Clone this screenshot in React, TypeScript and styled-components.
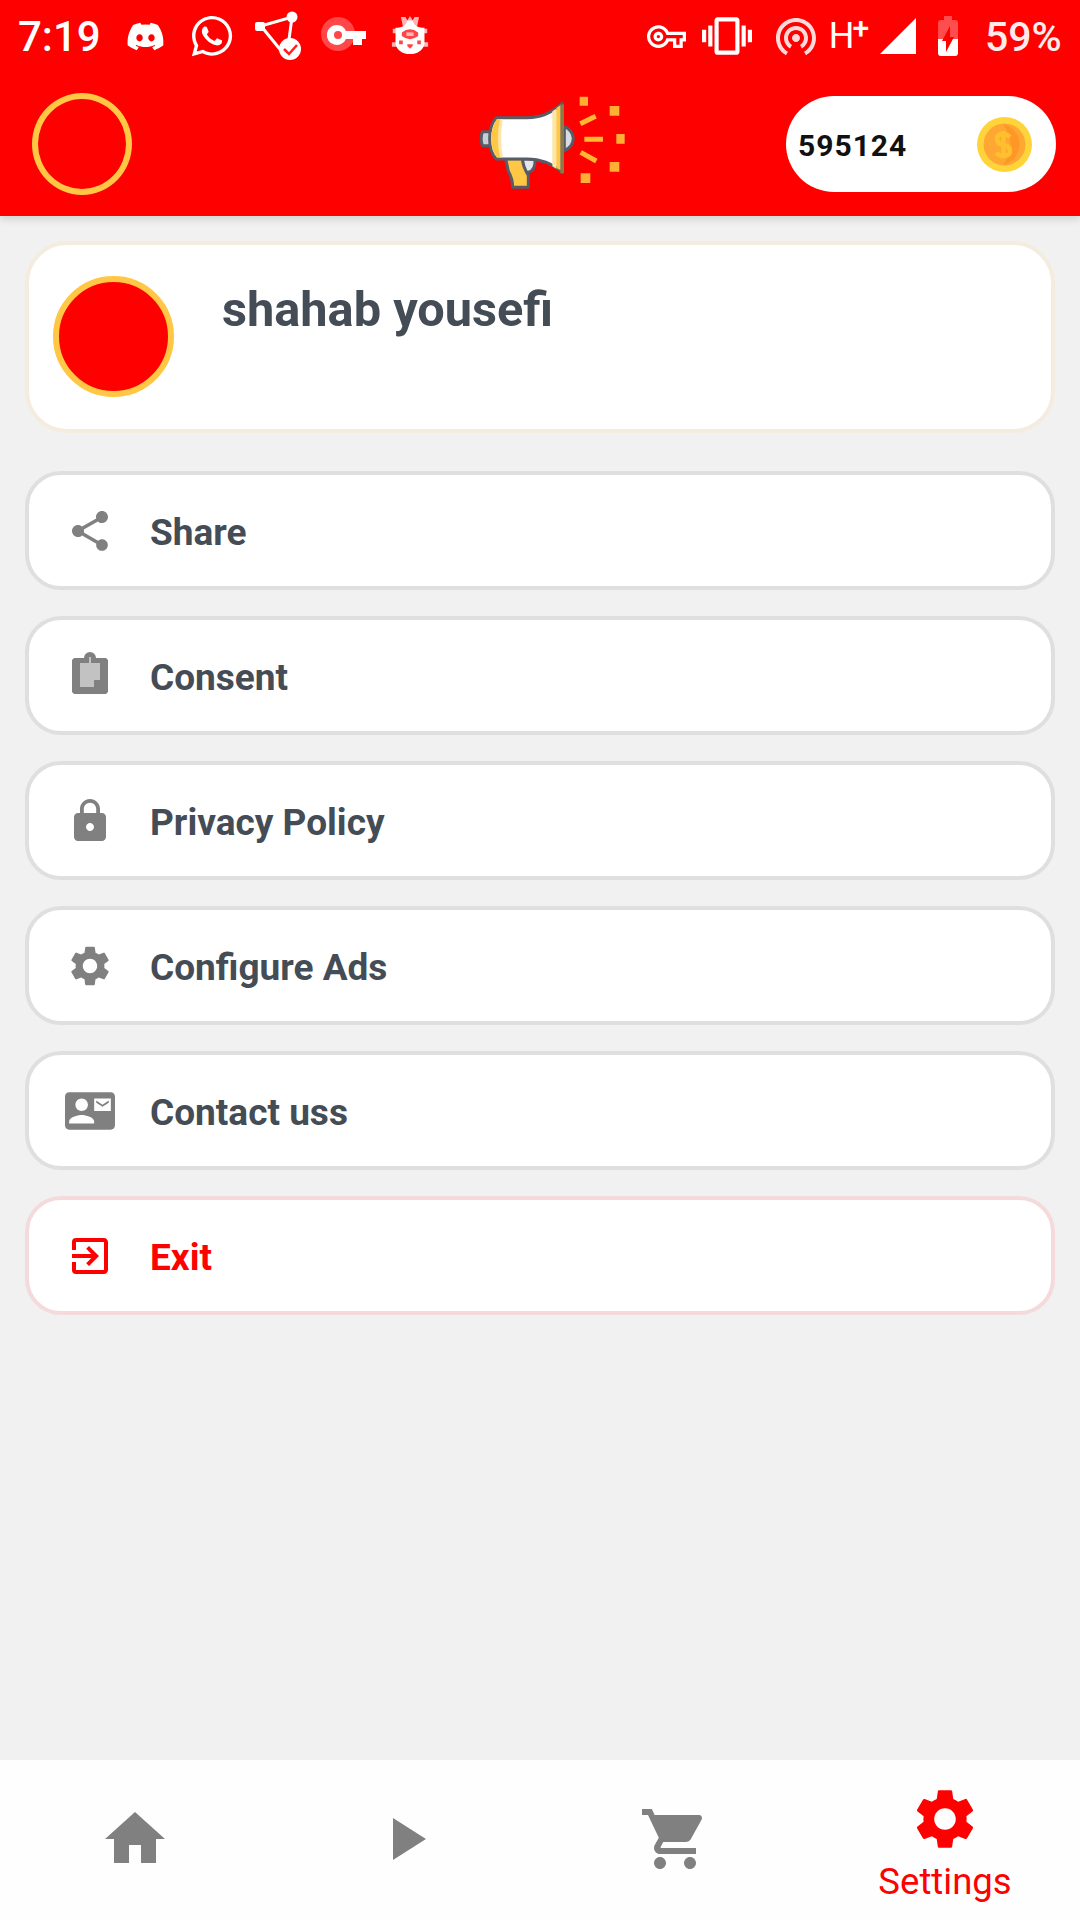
import React from 'react';
import styled, { createGlobalStyle } from 'styled-components';
import {
  MdShare, MdLock, MdSettings, MdContactMail, MdExitToApp, MdHome, MdPlayArrow,
  MdShoppingCart, MdVibration, MdWifiTethering, MdOutlineVpnKey, MdBatteryCharging50,
} from 'react-icons/md';
import { FaDiscord, FaWhatsapp } from 'react-icons/fa';

const GlobalStyle = createGlobalStyle`
  *, *::before, *::after { box-sizing: border-box; }
  body { margin: 0; background: #f1f1f1; }
  svg { display: block; flex: none; }
`;

const Screen = styled.div`
  width: 1080px;
  height: 1920px;
  display: flex;
  flex-direction: column;
  overflow: hidden;
  background: #f1f1f1;
  font-family: Roboto, "Liberation Sans", sans-serif;
`;

const Header = styled.header`
  flex: none;
  height: 216px;
  background: #ff0000;
  color: #fff;
  box-shadow: 0 3px 8px rgba(0, 0, 0, 0.14);
`;

const StatusBar = styled.div`
  height: 72px;
  display: flex;
  align-items: center;
  justify-content: space-between;
  padding: 0 17px 0 18px;
`;

const StatusGroup = styled.div`
  display: flex;
  align-items: center;
`;

const Clock = styled.span`
  width: 84px;
  padding-top: 2px;
  font-size: 42px;
  font-weight: 500;
  line-height: 72px;
  white-space: nowrap;
`;

const Battery = styled.span`
  width: 78px;
  padding-top: 2px;
  font-size: 41px;
  font-weight: 500;
  line-height: 72px;
  white-space: nowrap;
  opacity: 0.92;
`;

const Slot = styled.span<{ $w: number; $gap: number; $faint?: boolean }>`
  width: ${(p) => p.$w}px;
  margin-left: ${(p) => p.$gap}px;
  display: flex;
  justify-content: center;
  opacity: ${(p) => (p.$faint ? 0.85 : 1)};
`;

const Network = styled.span`
  display: flex;
  align-items: flex-start;
  font-size: 36px;
  line-height: 40px;
`;

const NetworkPlus = styled.span`
  font-size: 30px;
  font-weight: 500;
  line-height: 24px;
  margin-left: -2px;
`;

const AppBar = styled.div`
  height: 144px;
  padding: 0 24px 0 32px;
  display: grid;
  grid-template-columns: 270px 1fr 270px;
  align-items: center;
`;

const Avatar = styled.div<{ $w: number; $h: number }>`
  flex: none;
  width: ${(p) => p.$w}px;
  height: ${(p) => p.$h}px;
  border: 6px solid #ffc743;
  border-radius: 50%;
  background: #ff0000;
`;

const Logo = styled.div`
  display: flex;
  padding-left: 175px;
`;

const Coins = styled.div`
  height: 96px;
  border-radius: 48px;
  background: #fff;
  color: #111;
  display: flex;
  align-items: center;
  justify-content: space-between;
  padding: 2px 23px 2px 12px;
  font-size: 30px;
  font-weight: 700;
  letter-spacing: 1px;
`;

const CoinCount = styled.span`
  padding-top: 3px;
`;

const Content = styled.main`
  flex: 1;
  padding: 25px 25px 0;
`;

const Profile = styled.section`
  height: 192px;
  border: 4px solid #f4ecdf;
  border-radius: 42px;
  background: #fff;
  display: flex;
  align-items: flex-start;
  padding: 31px 24px;
`;

const Name = styled.h1`
  margin: 0 0 0 48px;
  padding-top: 4px;
  color: #444c55;
  font-size: 48.7px;
  font-weight: 700;
  line-height: 60px;
`;

const Menu = styled.nav`
  margin-top: 38px;
  display: flex;
  flex-direction: column;
  gap: 26px;
`;

const MenuItem = styled.a<{ $danger?: boolean }>`
  height: 119px;
  border: 4px solid ${(p) => (p.$danger ? '#f5dadb' : '#dedfe1')};
  border-radius: 36px;
  background: #fff;
  display: flex;
  align-items: center;
  gap: 36px;
  padding-left: 37px;
  color: ${(p) => (p.$danger ? '#ff0000' : '#444c55')};
  font-size: 37px;
  font-weight: 700;

  svg { color: ${(p) => (p.$danger ? '#ff0000' : '#808080')}; }
`;

const IconBox = styled.span`
  width: 48px;
  display: flex;
  justify-content: center;
`;

const MenuLabel = styled.span`
  padding-top: 4px;
`;

const TabBar = styled.footer`
  flex: none;
  height: 160px;
  background: #fefefe;
  display: grid;
  grid-template-columns: repeat(4, 1fr);
`;

const Tab = styled.a<{ $active?: boolean }>`
  display: flex;
  flex-direction: column;
  align-items: center;
  padding-top: ${(p) => (p.$active ? 23 : 43)}px;
  color: ${(p) => (p.$active ? '#ff0000' : '#808080')};
`;

const TabLabel = styled.span`
  font-size: 36.5px;
  line-height: 42px;
  margin-top: 6px;
`;

const RouteCheckIcon = () => (
  <svg width="48" height="50" viewBox="0 0 48 50" fill="none" stroke="#fff" strokeWidth="3">
    <path d="M7 15 38 6 34 36M7 15 29 42" />
    <rect x="1" y="11" width="10" height="9" rx="2" fill="#fff" stroke="none" />
    <circle cx="38" cy="6" r="5.5" fill="#fff" stroke="none" />
    <circle cx="36" cy="38" r="11" fill="#fff" stroke="none" />
    <path d="m30 38 5 5 8-9" stroke="#ff2020" strokeWidth="2.5" />
  </svg>
);

const KeyBadgeIcon = () => (
  <svg width="48" height="40" viewBox="0 0 48 40">
    <circle cx="18" cy="18" r="17" fill="#ff4747" />
    <path fill="#fff" fillRule="evenodd" d="M17 9a10 10 0 1 0 9 14h7v6h9v-6h4v-8H26a10 10 0 0 0-9-6Zm1 6a4 4 0 1 1 0 8 4 4 0 0 1 0-8Z" />
  </svg>
);

const MascotIcon = () => (
  <svg width="38" height="46" viewBox="0 0 42 48">
    <path fill="#ffb0b0" d="M11 3h5l2 4 3-5 3 5 2-4h5l-2 10H13Z" />
    <path fill="#ffb0b0" d="M2 16h5v5H2zM35 16h5v5h-5zM1 31h6v5H1zM35 31h6v5h-6z" />
    <path fill="#fff" d="M5 15c6 0 11-1 13-8h6c2 7 7 8 13 8v18c-2 7-8 11-16 11S7 40 5 33Z" />
    <path fill="#ff4545" d="M12 20q9-7 18 0v4q-9 7-18 0Z" />
    <path fill="#ffb5b5" d="M17 20h8v4h-8z" />
    <path fill="#ff4545" d="m18 35 3 3 3-3v-2h-6ZM9 29h4v4H9zM29 29h4v4h-4z" />
  </svg>
);

const SignalIcon = () => (
  <svg width="36" height="36" viewBox="0 0 36 36">
    <path fill="#fff" d="M36 0v36H0Z" />
  </svg>
);

const MegaphoneIcon = () => (
  <svg width="153" height="100" viewBox="80 70 459 300">
    <g stroke="#565d68" strokeWidth="9" strokeLinejoin="round">
      <path fill="#c9cdd4" d="M120 183H96q-7 20 0 42h24Z" />
      <path fill="#d8dce2" d="M342 168q25 10 27 36-2 26-27 36Z" />
      <path fill="#e4e6ea" d="M216 265h38q2 35-20 40h-14Z" />
      <path fill="#ffc743" d="M166 264h50q2 25 18 50v36h-47q0-26-13-48Z" />
      <path fill="#fff" d="M138 141h92q60 0 105-43v206q-45-39-105-39h-92q-20-20-20-61t20-63Z" />
    </g>
    <path fill="#ffc743" d="M139 146h12v114h-12q-16-22-16-56t16-58Z" />
    <path fill="#ffe5a6" d="M149 146h8q-9 58 0 114h-8q-13-56 0-114ZM306 122l12-8v180l-12-7Z" />
    <path fill="#ffc743" d="m318 112 13-9v196l-13-7Z" />
    <path fill="#8d794c" d="M330 101h11v207h-11Z" />
    <g stroke="#ffb82f" strokeWidth="15">
      <path d="m390 159 46-22M402 206h56M391 245l47 26" />
    </g>
    <path fill="#ffaf33" d="M388 78h25v27h-25zM478 106h29v29h-29zM498 190h25v29h-25zM478 274h29v29h-29zM391 308h29v29h-29z" />
  </svg>
);

const CoinIcon = () => (
  <svg width="57" height="57" viewBox="0 0 57 57">
    <circle cx="28.5" cy="28.5" r="27.5" fill="#ffd43b" />
    <circle cx="28.5" cy="28.5" r="21" fill="#ffa733" />
    <path fill="#ff9726" d="M27 8a21 21 0 0 1 0 41q15-20 0-41Z" />
    <path fill="none" stroke="#ffc02e" strokeWidth="4.500" d="M34 21q-3-3-7-3-6 0-6 5t7 6q6 1 6 6t-7 5q-4 0-7-3M27.500 15v27" />
  </svg>
);

const ClipboardIcon = () => (
  <svg width="48" height="48" viewBox="0 0 48 48">
    <path fill="currentColor" d="M8 6h10a6 6 0 0 1 12 0h10l2 2v32l-2 2H8l-2-2V8Z" />
    <path fill="#c2c2c2" d="M23 5h2v6h9v17h-6v7H14V11h9Z" />
  </svg>
);

const menu = [
  { label: 'Share', icon: <MdShare size={48} /> },
  { label: 'Consent', icon: <ClipboardIcon /> },
  { label: 'Privacy Policy', icon: <MdLock size={48} /> },
  { label: 'Configure Ads', icon: <MdSettings size={48} /> },
  { label: 'Contact uss', icon: <MdContactMail size={50} /> },
  { label: 'Exit', icon: <MdExitToApp size={48} />, danger: true },
];

export default function App() {
  return (
    <Screen>
      <GlobalStyle />
      <Header>
        <StatusBar>
          <StatusGroup>
            <Clock>7:19</Clock>
            <Slot $w={40} $gap={23}><FaDiscord size={39} /></Slot>
            <Slot $w={48} $gap={23}><FaWhatsapp size={46} /></Slot>
            <Slot $w={48} $gap={18}><RouteCheckIcon /></Slot>
            <Slot $w={48} $gap={18}><KeyBadgeIcon /></Slot>
            <Slot $w={42} $gap={21}><MascotIcon /></Slot>
          </StatusGroup>
          <StatusGroup>
            <Slot $w={42} $gap={0}><MdOutlineVpnKey size={39} /></Slot>
            <Slot $w={52} $gap={14}><MdVibration size={50} /></Slot>
            <Slot $w={48} $gap={19} $faint><MdWifiTethering size={48} /></Slot>
            <Slot $w={42} $gap={8}>
              <Network>H<NetworkPlus>+</NetworkPlus></Network>
            </Slot>
            <Slot $w={36} $gap={10}><SignalIcon /></Slot>
            <Slot $w={48} $gap={8}><MdBatteryCharging50 size={48} /></Slot>
            <Slot $w={78} $gap={13}><Battery>59%</Battery></Slot>
          </StatusGroup>
        </StatusBar>
        <AppBar>
          <Avatar $w={100} $h={102} />
          <Logo><MegaphoneIcon /></Logo>
          <Coins><CoinCount>595124</CoinCount><CoinIcon /></Coins>
        </AppBar>
      </Header>
      <Content>
        <Profile>
          <Avatar $w={121} $h={121} />
          <Name>shahab yousefi</Name>
        </Profile>
        <Menu>
          {menu.map((item) => (
            <MenuItem key={item.label} $danger={item.danger}>
              <IconBox>{item.icon}</IconBox>
              <MenuLabel>{item.label}</MenuLabel>
            </MenuItem>
          ))}
        </Menu>
      </Content>
      <TabBar>
        <Tab><MdHome size={72} /></Tab>
        <Tab><MdPlayArrow size={72} /></Tab>
        <Tab><MdShoppingCart size={72} /></Tab>
        <Tab $active>
          <MdSettings size={72} />
          <TabLabel>Settings</TabLabel>
        </Tab>
      </TabBar>
    </Screen>
  );
}
